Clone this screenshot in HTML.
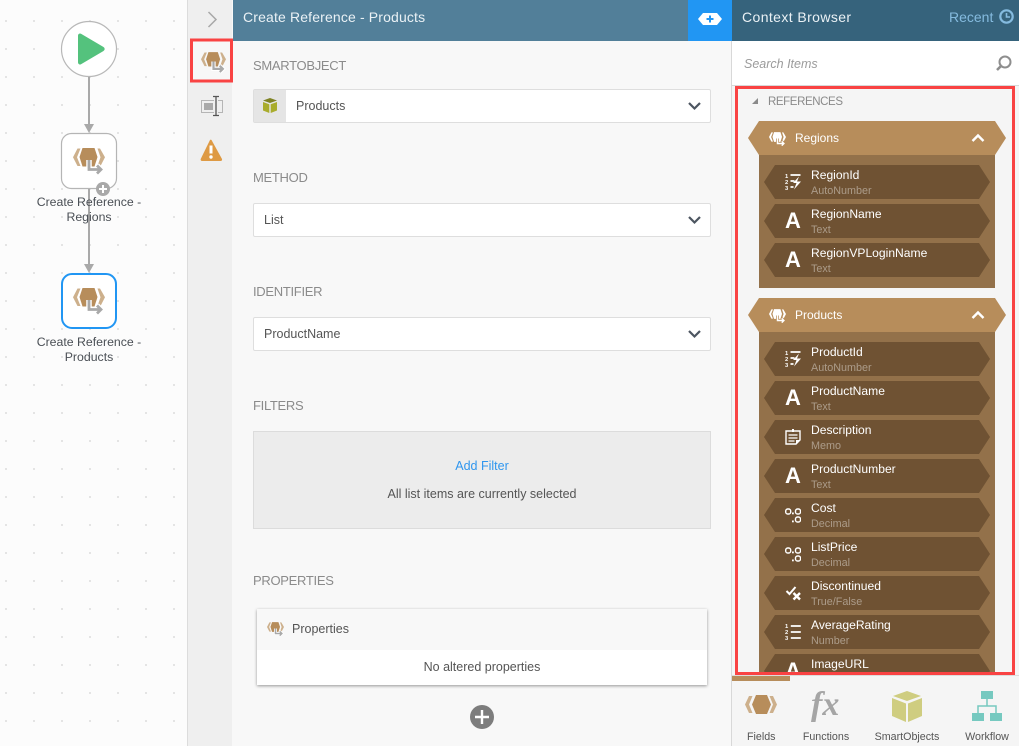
<!DOCTYPE html>
<html><head><meta charset="utf-8"><style>
html,body{margin:0;padding:0}
body{width:1019px;height:746px;overflow:hidden;position:relative;background:#f8f8f8;font-family:"Liberation Sans",sans-serif;font-size:12px;color:#555}
.a{position:absolute}
.t{position:absolute;white-space:nowrap;line-height:16px}
.lbl{position:absolute;left:253px;font-size:13px;color:#8b8b8b;line-height:18px;letter-spacing:-.3px}
.sel{position:absolute;left:253px;width:456px;height:32px;background:#fff;border:1px solid #dedede;border-radius:2px}
.sel span{position:absolute;left:10px;top:8px;line-height:16px;font-size:12.5px;color:#555}
.sel svg{position:absolute;right:9px;top:11px}
.hd{position:absolute;left:748px;width:258px;height:34px;background:#b78d5b;clip-path:polygon(11px 0,247px 0,100% 50%,247px 100%,11px 100%,0 50%)}
.bd{position:absolute;left:759px;width:236px;background:#93714a}
.hn{position:absolute;left:795px;color:#fff;font-size:12px;line-height:16px;white-space:nowrap}
.it{position:absolute;left:764px;width:226px;height:34px;background:#6f5233;clip-path:polygon(11px 0,215px 0,100% 50%,215px 100%,11px 100%,0 50%)}
.n{position:absolute;left:47px;top:2px;color:#fff;font-size:12.1px;line-height:16px;white-space:nowrap}
.s{position:absolute;left:47px;top:19px;color:#ac9c8a;font-size:10.8px;line-height:14px;white-space:nowrap}
.i{position:absolute;left:21px;top:8px}
.A{position:absolute;left:20px;top:4px;width:18px;text-align:center;color:#fff;font-size:22px;font-weight:bold;line-height:26px}
.tab{position:absolute;top:730px;font-size:10.7px;color:#555;line-height:14px;white-space:nowrap;text-align:center}
</style></head><body>
<svg width="0" height="0" style="position:absolute"><defs>
<symbol id="ref" viewBox="0 0 32 28">
<polygon points="9.500,0 21.500,0 24.500,9 21.500,18.500 9.500,18.500 6.500,9" fill="#b78d5b"/>
<polygon points="4.500,.5 7.500,.5 4,9.200 7.500,18 4.500,18 0,9.200" fill="#cdb08c"/>
<polygon points="27,.5 24.500,.5 27.500,9.200 24.500,18 27.500,18 32,9.200" fill="#cdb08c"/>
<path d="M16 12V21.500H28M24 17.500l4 4-4 4" fill="none" stroke="#fff" stroke-width="5.500"/>
<path d="M16 12V21.500H28M24 17.500l4 4-4 4" fill="none" stroke="#a9a9a9" stroke-width="2.800"/>
</symbol>
<symbol id="refw" viewBox="0 0 32 28">
<polygon points="9.500,0 21.500,0 24.500,9 21.500,18.500 9.500,18.500 6.500,9" fill="#fff"/>
<polygon points="4.500,.5 7.500,.5 4,9.200 7.500,18 4.500,18 0,9.200" fill="#fff"/>
<polygon points="27,.5 24.500,.5 27.500,9.200 24.500,18 27.500,18 32,9.200" fill="#fff"/>
<path d="M16 12V21.500H28M24 17.500l4 4-4 4" fill="none" stroke="#b78d5b" stroke-width="5.500"/>
<path d="M16 12V21.500H28M24 17.500l4 4-4 4" fill="none" stroke="#fff" stroke-width="2.800"/>
</symbol>
<symbol id="auto" viewBox="0 0 16 17">
<text x="0" y="5" font-size="5.800" font-weight="bold" fill="#fff" font-family="Liberation Sans">1</text><text x="0" y="11" font-size="5.800" font-weight="bold" fill="#fff" font-family="Liberation Sans">2</text><text x="0" y="17" font-size="5.800" font-weight="bold" fill="#fff" font-family="Liberation Sans">3</text>
<path d="M5.500 2h10M5.500 8h4M5.500 14h3" stroke="#fff" stroke-width="1.700"/>
<path d="M14 3.500L8 10h3.500L9 16.500l7-8h-4z" fill="#fff"/>
</symbol>
<symbol id="memo" viewBox="0 0 16 17">
<path d="M1 3h14v9l-4 4H1z" fill="none" stroke="#fff" stroke-width="1.400"/>
<path d="M3.500 7h9M3.500 10h9M3.500 13h6" stroke="#fff" stroke-width="1.300"/>
<path d="M8 1v3" stroke="#fff" stroke-width="2"/><path d="M11 16v-4h4z" fill="#fff"/>
</symbol>
<symbol id="dec" viewBox="0 0 16 17">
<rect x=".7" y="3" width="5" height="5" rx="2" fill="none" stroke="#fff" stroke-width="1.400"/>
<rect x="10.500" y="3" width="5" height="5" rx="2" fill="none" stroke="#fff" stroke-width="1.400"/>
<rect x="10.500" y="11" width="5" height="5" rx="2" fill="none" stroke="#fff" stroke-width="1.400"/>
<rect x="7" y="6.500" width="1.800" height="1.800" fill="#fff"/><rect x="7" y="14.500" width="1.800" height="1.800" fill="#fff"/>
</symbol>
<symbol id="bool" viewBox="0 0 16 17">
<path d="M1.500 7l3 3 6-7" fill="none" stroke="#fff" stroke-width="2"/>
<path d="M8.500 9l6.500 6.500M15 9l-6.500 6.500" stroke="#fff" stroke-width="2.400"/>
</symbol>
<symbol id="num" viewBox="0 0 16 17">
<text x="0" y="5" font-size="5.800" font-weight="bold" fill="#fff" font-family="Liberation Sans">1</text><text x="0" y="11" font-size="5.800" font-weight="bold" fill="#fff" font-family="Liberation Sans">2</text><text x="0" y="17" font-size="5.800" font-weight="bold" fill="#fff" font-family="Liberation Sans">3</text>
<path d="M5.800 3h10M5.800 9h10M5.800 15h10" stroke="#fff" stroke-width="1.800"/>
</symbol>
<symbol id="chev" viewBox="0 0 13 10"><path d="M1 2l5.500 5.500L12 2" fill="none" stroke="#4c5560" stroke-width="2.200"/></symbol>
</defs></svg>

<!-- canvas -->
<div class="a" style="left:0;top:0;width:187px;height:746px;background-color:#fcfcfc;background-image:radial-gradient(circle at 1px 1px,#dcdcdc .8px,transparent 1px);background-size:28px 28px;background-position:5px 20px"></div>
<svg class="a" style="left:0;top:0" width="187" height="400">
<circle cx="89" cy="49" r="27.500" fill="#fff" stroke="#b8b8b8" stroke-width="1.200"/>
<path d="M78 35.500a2 2 0 0 1 3-1.700L103.500 47a2.300 2.300 0 0 1 0 4L81 64.200a2 2 0 0 1-3-1.700z" fill="#54c27d"/>
<path d="M89 77V126M89 189V266" stroke="#a9a9a9" stroke-width="2"/>
<path d="M84 124h10L89 133zM84 264h10L89 273z" fill="#a9a9a9"/>
<rect x="61.500" y="133.500" width="55" height="55" rx="10" fill="#fff" stroke="#b5b5b5" stroke-width="1.200"/>
<use href="#ref" x="73" y="148" width="32" height="28"/>
<rect x="62" y="274" width="54" height="54" rx="10" fill="#fff" stroke="#2196f3" stroke-width="2"/>
<use href="#ref" x="73" y="288" width="32" height="28"/>
<circle cx="103" cy="189" r="7" fill="#a9a9a9"/>
<path d="M103 185v8M99 189h8" stroke="#fff" stroke-width="2"/>
</svg>
<div class="t" style="left:0;width:178px;text-align:center;top:194px;line-height:15px;color:#4a4f55;font-size:12.300px;padding-top:1px">Create Reference -<br>Regions</div>
<div class="t" style="left:0;width:178px;text-align:center;top:334px;line-height:15px;color:#4a4f55;font-size:12.300px;padding-top:1px">Create Reference -<br>Products</div>

<!-- side strip -->
<div class="a" style="left:187px;top:0;width:45px;height:746px;background:#efefef;border-left:1px solid #dcdcdc;box-sizing:border-box"></div>
<svg class="a" style="left:187px;top:0" width="46" height="170">
<path d="M21.500 12l7.500 7.500-7.500 7.500" fill="none" stroke="#a8a8a8" stroke-width="1.500"/>
<rect x="4.500" y="40" width="40" height="41" fill="#f7f7f7" stroke="#f94343" stroke-width="3"/>
<use href="#ref" x="14" y="52" width="25" height="22"/>
<rect x="14.500" y="100.500" width="21" height="12" fill="none" stroke="#b5b5b5"/>
<rect x="17" y="103" width="9" height="7" fill="#a9a9a9"/>
<path d="M29 96v20" fill="none" stroke="#efefef" stroke-width="4"/>
<path d="M26 96.500h6M26 115.500h6M29 96.500v19" fill="none" stroke="#555" stroke-width="1.300"/>
<path d="M24.500 140l10.500 19a1.500 1.500 0 0 1-1.300 2H15a1.500 1.500 0 0 1-1.300-2L23 140a1 1 0 0 1 1.500 0z" fill="#de9a44"/>
<path d="M24 145.500v8" stroke="#fff" stroke-width="3"/><circle cx="24" cy="157" r="1.700" fill="#fff"/>
</svg>

<!-- main -->
<div class="a" style="left:233px;top:0;width:455px;height:41px;background:#527f99"></div>
<div class="t" style="left:243px;top:9px;color:#eaf1f5;font-size:14px;letter-spacing:.15px">Create Reference - Products</div>
<div class="a" style="left:688px;top:0;width:44px;height:41px;background:#2196f3"></div>
<svg class="a" style="left:698px;top:13px" width="24" height="12"><polygon points="5,0 19,0 24,6 19,12 5,12 0,6" fill="#fff"/><path d="M12 2.500v7M8.500 6h7" stroke="#2196f3" stroke-width="2"/></svg>

<div class="lbl" style="top:57px">SMARTOBJECT</div>
<div class="sel" style="top:89px"><span style="left:42px">Products</span><svg width="13" height="10"><use href="#chev"/></svg></div>
<div class="a" style="left:254px;top:90px;width:32px;height:32px;background:#e5e5e5"></div>
<svg class="a" style="left:263px;top:98px" width="14" height="15"><path d="M7 0l7 2.500L7 5 0 2.500z" fill="#7f8324"/><path d="M0 4l6.300 2.300V15L0 12.500zM14 4L7.700 6.300V15L14 12.500z" fill="#a9ac2c"/></svg>

<div class="lbl" style="top:169px">METHOD</div>
<div class="sel" style="top:203px"><span>List</span><svg width="13" height="10"><use href="#chev"/></svg></div>
<div class="lbl" style="top:283px">IDENTIFIER</div>
<div class="sel" style="top:317px"><span>ProductName</span><svg width="13" height="10"><use href="#chev"/></svg></div>
<div class="lbl" style="top:397px">FILTERS</div>
<div class="a" style="left:253px;top:431px;width:456px;height:96px;background:#ececec;border:1px solid #dcdcdc"></div>
<div class="t" style="left:253px;width:458px;text-align:center;top:458px;color:#2f96ee;font-size:12.500px">Add Filter</div>
<div class="t" style="left:253px;width:458px;text-align:center;top:486px;color:#555;font-size:12.500px">All list items are currently selected</div>
<div class="lbl" style="top:572px">PROPERTIES</div>
<div class="a" style="left:257px;top:609px;width:450px;height:76px;background:#fff;box-shadow:0 1px 3px rgba(0,0,0,.4)"></div>
<div class="a" style="left:257px;top:609px;width:450px;height:41px;background:#f8f8f8"></div>
<svg class="a" style="left:267px;top:622px" width="17" height="15"><use href="#ref"/></svg>
<div class="t" style="left:292px;top:621px;color:#555;font-size:12.500px">Properties</div>
<div class="t" style="left:257px;width:450px;text-align:center;top:659px;color:#555;font-size:12.500px">No altered properties</div>
<svg class="a" style="left:470px;top:705px" width="24" height="24"><circle cx="12" cy="12" r="12" fill="#7d7d7d"/><path d="M12 5v14M5 12h14" stroke="#fff" stroke-width="2.400"/></svg>

<!-- context browser -->
<div class="a" style="left:732px;top:0;width:287px;height:41px;background:#36637c"></div>
<div class="t" style="left:742px;top:9px;color:#eaf1f5;font-size:14px;letter-spacing:.4px">Context Browser</div>
<div class="t" style="left:949px;top:9px;color:#85bbdf;font-size:14px">Recent</div>
<svg class="a" style="left:999px;top:9px" width="15" height="15"><circle cx="7.500" cy="7.500" r="6.200" fill="none" stroke="#85bbdf" stroke-width="2.200"/><path d="M7.500 4v4H11" fill="none" stroke="#85bbdf" stroke-width="1.600"/></svg>
<div class="a" style="left:732px;top:41px;width:287px;height:44px;background:#fff;border-bottom:1px solid #d8d8d8"></div>
<div class="a" style="left:731px;top:41px;width:1px;height:705px;background:#d8d8d8"></div>
<div class="t" style="left:744px;top:56px;color:#9b9b9b;font-style:italic;font-size:12.500px">Search Items</div>
<svg class="a" style="left:995px;top:54px" width="18" height="18"><circle cx="10" cy="8" r="5.500" fill="none" stroke="#8e8e8e" stroke-width="2"/><path d="M6 12l-4 4" stroke="#8e8e8e" stroke-width="2.600"/></svg>

<div class="a" style="left:732px;top:86px;width:287px;height:590px;background:#f5f5f5;overflow:hidden"></div>
<svg class="a" style="left:751px;top:97px" width="8" height="8"><path d="M7 1v6H1z" fill="#8a8a8a"/></svg>
<div class="t" style="left:768px;top:94px;color:#8a8a8a;font-size:11.500px;letter-spacing:-.4px">REFERENCES</div>

<div class="a" style="left:0;top:0;width:1019px;height:672px;overflow:hidden">
<div class="bd" style="top:155px;height:133px"></div>
<div class="hd" style="top:121px"></div>
<svg class="a" style="left:769px;top:132px" width="17" height="15"><use href="#refw"/></svg>
<div class="hn" style="top:130px">Regions</div>
<svg class="a" style="left:971px;top:133px" width="14" height="10"><path d="M1.500 8L7 2.500 12.500 8" fill="none" stroke="#fff" stroke-width="2.400"/></svg>
<div class="it" style="top:165px"><svg class="i" width="16" height="17"><use href="#auto"/></svg><div class="n">RegionId</div><div class="s">AutoNumber</div></div>
<div class="it" style="top:204px"><div class="A">A</div><div class="n">RegionName</div><div class="s">Text</div></div>
<div class="it" style="top:243px"><div class="A">A</div><div class="n">RegionVPLoginName</div><div class="s">Text</div></div>

<div class="bd" style="top:332px;height:350px"></div>
<div class="hd" style="top:298px"></div>
<svg class="a" style="left:769px;top:309px" width="17" height="15"><use href="#refw"/></svg>
<div class="hn" style="top:307px">Products</div>
<svg class="a" style="left:971px;top:310px" width="14" height="10"><path d="M1.500 8L7 2.500 12.500 8" fill="none" stroke="#fff" stroke-width="2.400"/></svg>
<div class="it" style="top:342px"><svg class="i" width="16" height="17"><use href="#auto"/></svg><div class="n">ProductId</div><div class="s">AutoNumber</div></div>
<div class="it" style="top:381px"><div class="A">A</div><div class="n">ProductName</div><div class="s">Text</div></div>
<div class="it" style="top:420px"><svg class="i" width="16" height="17"><use href="#memo"/></svg><div class="n">Description</div><div class="s">Memo</div></div>
<div class="it" style="top:459px"><div class="A">A</div><div class="n">ProductNumber</div><div class="s">Text</div></div>
<div class="it" style="top:498px"><svg class="i" width="16" height="17"><use href="#dec"/></svg><div class="n">Cost</div><div class="s">Decimal</div></div>
<div class="it" style="top:537px"><svg class="i" width="16" height="17"><use href="#dec"/></svg><div class="n">ListPrice</div><div class="s">Decimal</div></div>
<div class="it" style="top:576px"><svg class="i" width="16" height="17"><use href="#bool"/></svg><div class="n">Discontinued</div><div class="s">True/False</div></div>
<div class="it" style="top:615px"><svg class="i" width="16" height="17"><use href="#num"/></svg><div class="n">AverageRating</div><div class="s">Number</div></div>
<div class="it" style="top:654px"><div class="A">A</div><div class="n">ImageURL</div><div class="s">Text</div></div>
</div>
<div class="a" style="left:735px;top:86px;width:274px;height:583px;border:3px solid #f94343"></div>

<!-- bottom tabs -->
<div class="a" style="left:732px;top:675px;width:287px;height:71px;background:#f5f5f5;border-top:1px solid #dcdcdc;box-sizing:border-box"></div>
<div class="a" style="left:732px;top:676px;width:58px;height:5px;background:#b78d5b"></div>
<svg class="a" style="left:745px;top:695px" width="32" height="20"><polygon points="11,0 22,0 26,9.500 22,19 11,19 7,9.500" fill="#b78d5b"/><polygon points="4,1 7.500,1 4,9.500 7.500,18 4,18 0,9.500" fill="#cdb08c"/><polygon points="28,1 24.500,1 28,9.500 24.500,18 28,18 32,9.500" fill="#cdb08c"/></svg>
<div class="t" style="left:811px;top:686px;font:italic bold 34px/38px 'Liberation Serif',serif;color:#a5a5a5">fx</div>
<svg class="a" style="left:892px;top:691px" width="30" height="31"><path d="M15 0l14 5-14 5L1 5z" fill="#cfcd80"/><path d="M0 7l14 5.500V31L0 25zM30 7l-14 5.500V31l14-6z" fill="#cfcd80"/></svg>
<svg class="a" style="left:972px;top:691px" width="30" height="30"><rect x="9" y="0" width="12" height="8" fill="#76c9c0"/><rect x="0" y="22" width="12" height="8" fill="#76c9c0"/><rect x="18" y="22" width="12" height="8" fill="#76c9c0"/><path d="M15 8v7M6 22v-7h18V22" fill="none" stroke="#76c9c0" stroke-width="1.500"/></svg>
<div class="tab" style="left:747px;width:28px">Fields</div>
<div class="tab" style="left:802px;width:48px">Functions</div>
<div class="tab" style="left:873px;width:68px">SmartObjects</div>
<div class="tab" style="left:962px;width:50px">Workflow</div>
</body></html>
